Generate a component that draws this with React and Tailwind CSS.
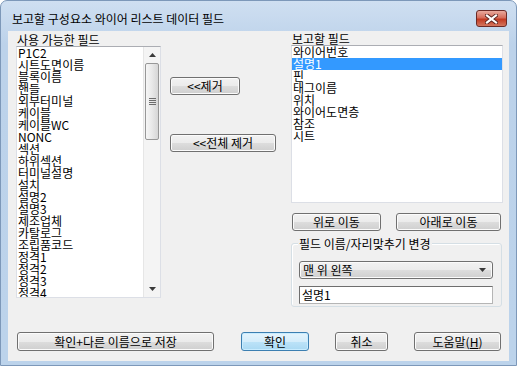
import React from 'react';

const leftItems = [
  'P1C2', '시트도면이름', '블록이름', '핸들', '외부터미널', '케이블', '케이블WC', 'NONC', '섹션', '하위섹션', '터미널설명',
  '설치', '설명2', '설명3', '제조업체', '카탈로그', '조립품코드', '정격1', '정격2', '정격3', '정격4',
];
const rightItems = ['와이어번호', '설명1', '핀', '태그이름', '위치', '와이어도면층', '참조', '시트'];

// Win7 스타일 버튼
const Btn = ({ className = '', primary = false, children }) => (
  <div
    className={`flex items-center justify-center rounded-[3px] border leading-[12px] ${
      primary
        ? 'border-[#3c7fb1] bg-[linear-gradient(#e5f4fc,#d4edfb_50%,#bde3f8_50%,#a9d9f3)] shadow-[inset_0_0_0_1px_#c8ecff]'
        : 'border-[#707070] bg-[linear-gradient(#f2f2f2,#ebebeb_50%,#dddddd_50%,#cfcfcf)] shadow-[inset_0_0_0_1px_#fbfbfb]'
    } ${className}`}
  >
    {children}
  </div>
);

const Tri = ({ down = false }) => (
  <svg width="7" height="4" viewBox="0 0 7 4">
    <path d={down ? 'M0 0H7L3.5 4Z' : 'M0 4H7L3.5 0Z'} fill="#3a3a3a" />
  </svg>
);

const App = () => {
  return (
    <div className="h-[366px] w-[517px] bg-white text-[12px] text-black font-['Noto_Sans_CJK_KR','Noto_Sans',sans-serif]">
      <div className="flex h-full flex-col rounded-t-[7px] border border-[#7d98b9] bg-[linear-gradient(#cfdff1,#bcd2ea_12%,#bcd3eb)]">
        {/* 타이틀 바 */}
        <div className="flex h-[30px] shrink-0 items-start justify-between pl-[11px] pr-[9px] pt-[9px]">
          <span className="pt-[2px] leading-[13px]">보고할 구성요소 와이어 리스트 데이터 필드</span>
          <div className="flex h-[17px] w-[31px] items-center justify-center rounded-[3px] border border-[#6b2a26] bg-[linear-gradient(#e9aa9e,#d66d5b_45%,#c23a22_55%,#d3765f)]">
            <svg width="13" height="10" viewBox="0 0 13 10">
              <path d="M2 1.5L11 8.5M11 1.5L2 8.5" stroke="#5b2420" strokeWidth="4" strokeLinecap="square" />
              <path d="M2 1.5L11 8.5M11 1.5L2 8.5" stroke="#ffffff" strokeWidth="2.2" strokeLinecap="square" />
            </svg>
          </div>
        </div>

        {/* 클라이언트 영역 */}
        <div className="mx-[7px] flex h-[330px] shrink-0 flex-col bg-[#f0f0f0]">
          <div className="flex pl-[8px] pt-[2px]">
            {/* 사용 가능한 필드 */}
            <div className="w-[145px]">
              <div className="h-[13px] pl-px leading-[13px]">사용 가능한 필드</div>
              <div className="flex h-[252px] border border-[#dcdfe6] border-t-[#abadb3] bg-white">
                <div className="flex-1 overflow-hidden pl-[1px]">
                  {leftItems.map((t) => (
                    <div key={t} className="h-[12px] whitespace-nowrap leading-[12px]">{t}</div>
                  ))}
                </div>
                <div className="flex w-[17px] flex-col border-l border-[#e6e6e6] bg-[#f4f4f4]">
                  <div className="flex h-[16px] items-center justify-center"><Tri /></div>
                  <div className="mx-px flex h-[77px] items-center justify-center rounded-[2px] border border-[#979797] bg-[linear-gradient(90deg,#f6f6f6,#e8e8e8_50%,#d6d6d6)]">
                    <div className="flex flex-col gap-px">
                      <div className="h-px w-[7px] bg-[#6d6d6d]" />
                      <div className="h-px w-[7px] bg-[#6d6d6d]" />
                      <div className="h-px w-[7px] bg-[#6d6d6d]" />
                      <div className="h-px w-[7px] bg-[#6d6d6d]" />
                    </div>
                  </div>
                  <div className="flex-1" />
                  <div className="flex h-[17px] items-center justify-center"><Tri down /></div>
                </div>
              </div>
            </div>

            {/* 가운데 버튼 */}
            <div className="ml-[9px] flex w-[106px] flex-col pt-[44px]">
              <Btn className="h-[18px] w-[70px]">&lt;&lt;제거</Btn>
              <Btn className="mt-[39px] h-[18px] w-[106px]">&lt;&lt;전체 제거</Btn>
            </div>

            {/* 보고할 필드 */}
            <div className="ml-[15px] w-[212px]">
              <div className="h-[12px] pl-px leading-[12px]">보고할 필드</div>
              <div className="h-[158px] border border-[#dcdfe6] border-t-[#abadb3] bg-white">
                {rightItems.map((t, i) => (
                  <div
                    key={t}
                    className={`h-[12px] whitespace-nowrap pl-[1px] leading-[12px] ${i === 1 ? 'bg-[#3399ff] text-white' : ''}`}
                  >
                    {t}
                  </div>
                ))}
              </div>
              <div className="mt-[10px] flex pl-px">
                <Btn className="h-[18px] w-[89px]">위로 이동</Btn>
                <Btn className="ml-[15px] h-[18px] w-[105px]">아래로 이동</Btn>
              </div>
              <div className="relative mt-[12px] h-[64px] w-[211px] rounded-[3px] border border-[#d5dfe5] pl-[7px] pt-[17px] shadow-[inset_1px_1px_0_#ffffff]">
                <span className="absolute left-[6px] top-[-7px] bg-[#f0f0f0] px-[1px] leading-[13px]">필드 이름/자리맞추기 변경</span>
                <Btn className="h-[18px] w-[194px] !justify-between pl-[3px] pr-[6px]">
                  <span>맨 위 왼쪽</span>
                  <Tri down />
                </Btn>
                <div className="mt-[7px] flex h-[18px] w-[194px] items-center border border-[#b5b5b5] border-l-[#6e6e6e] border-t-[#6e6e6e] bg-white pl-[2px] leading-[12px]">
                  설명1
                </div>
              </div>
            </div>
          </div>

          {/* 하단 버튼 */}
          <div className="mt-[25px] flex pl-[9px]">
            <Btn className="h-[19px] w-[197px]">확인+다른 이름으로 저장</Btn>
            <Btn primary className="ml-[27px] h-[19px] w-[68px]">확인</Btn>
            <Btn className="ml-[26px] h-[19px] w-[53px]">취소</Btn>
            <Btn className="ml-[26px] h-[19px] w-[87px]">
              도움말(<span className="underline">H</span>)
            </Btn>
          </div>
        </div>
        <div className="flex-1" />
      </div>
    </div>
  );
};

export default App;
